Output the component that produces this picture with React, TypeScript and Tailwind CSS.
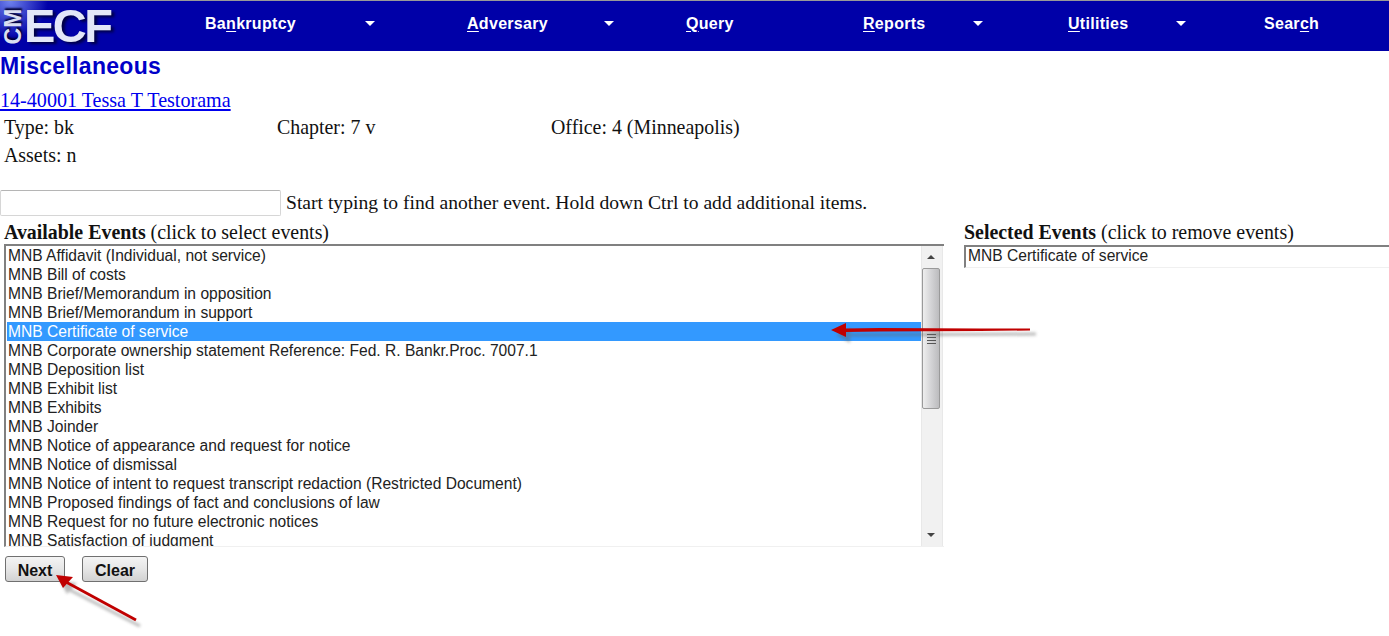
const events = [
  'MNB Affidavit (Individual, not service)',
  'MNB Bill of costs',
  'MNB Brief/Memorandum in opposition',
  'MNB Brief/Memorandum in support',
  'MNB Certificate of service',
  'MNB Corporate ownership statement Reference: Fed. R. Bankr.Proc. 7007.1',
  'MNB Deposition list',
  'MNB Exhibit list',
  'MNB Exhibits',
  'MNB Joinder',
  'MNB Notice of appearance and request for notice',
  'MNB Notice of dismissal',
  'MNB Notice of intent to request transcript redaction (Restricted Document)',
  'MNB Proposed findings of fact and conclusions of law',
  'MNB Request for no future electronic notices',
  'MNB Satisfaction of judgment',
]

const sans = "font-['Liberation_Sans',Arial,sans-serif]"

function Caret() {
  return <span className="w-0 h-0 border-x-[5px] border-x-transparent border-t-[5px] border-t-white" />
}

function NavItem({ before, letter, after, width, caretAt }: { before: string; letter: string; after: string; width: string; caretAt?: string }) {
  return (
    <div className={`${width} flex items-center shrink-0 pb-[5px]`}>
      <span className="text-[16px] font-bold tracking-[0.3px] text-white">
        {before}<span className="underline underline-offset-2">{letter}</span>{after}
      </span>
      {caretAt && <span className={`${caretAt} flex`}><Caret /></span>}
    </div>
  )
}

function Logo() {
  return (
    <div className="w-[205px] h-full shrink-0 relative bg-[radial-gradient(circle_at_10px_0px,#6f82ee_0px,#0000a8_38px)]">
      <div className="absolute left-[5px] top-[7px] h-[36px] w-[18px] flex items-center justify-center">
        <span className="-rotate-90 text-[23px] leading-[23px] font-bold text-[#d9def2] [text-shadow:2px_1px_2px_#000033]">CM</span>
      </div>
      <span className="absolute left-[24px] top-[1px] text-[47px] leading-[48px] font-bold tracking-[-2.5px] text-[#e3e7f8] blur-[0.4px] [text-shadow:3px_2px_3px_#000044]">ECF</span>
    </div>
  )
}

function Scrollbar() {
  return (
    <div className="w-[22px] mr-px shrink-0 h-full bg-[#f1f1f1] border-x border-[#e8e8e8] flex flex-col items-center pr-[2px]">
      <div className="h-[22px] flex items-center justify-center">
        <span className="w-0 h-0 border-x-[4px] border-x-transparent border-b-[4px] border-b-[#444]" />
      </div>
      <div className="w-[18px] h-[141px] rounded-[2px] border border-[#9a9a9a] bg-gradient-to-r from-[#eeeeee] via-[#d4d4d6] to-[#bcbcbe] flex flex-col items-center justify-center gap-[2px]">
        <span className="w-[9px] h-px bg-[#555]" />
        <span className="w-[9px] h-px bg-[#555]" />
        <span className="w-[9px] h-px bg-[#555]" />
        <span className="w-[9px] h-px bg-[#555]" />
      </div>
      <div className="flex-1" />
      <div className="h-[23px] flex items-center justify-center">
        <span className="w-0 h-0 border-x-[4px] border-x-transparent border-t-[4px] border-t-[#444]" />
      </div>
    </div>
  )
}

// red annotation arrows from the screenshot
function Arrows() {
  return (
    <svg className="absolute left-0 top-0 pointer-events-none" width="1389" height="636" viewBox="0 0 1389 636">
      <g opacity="0.45" className="blur-[1.5px]">
        <path d="M850 335 L1036 334" stroke="#666" strokeWidth="3" fill="none" />
        <path d="M836 335 L851 328 L850 343 Z" fill="#666" />
        <path d="M70 590 L140 626" stroke="#666" strokeWidth="3" fill="none" />
        <path d="M60 581 L77 583 L67 594 Z" fill="#666" />
      </g>
      <path d="M845 328.5 L880 328 L980 328.5 L1030 328.5 L1030 330.5 L980 331 L880 331.5 L845 332 Z" fill="#c00000" />
      <path d="M831 330 L846 323 L846 337 Z" fill="#c00000" />
      <path d="M66 582 L136 620" stroke="#c00000" strokeWidth="2.8" fill="none" />
      <path d="M56 575 L73 577 L63 588 Z" fill="#c00000" />
    </svg>
  )
}

export default function App() {
  return (
    <div className="w-[1389px] h-[636px] overflow-hidden relative bg-white font-['Liberation_Serif','Times_New_Roman',serif] text-[19.9px] leading-[28px] text-[#111]">
      {/* Top menu */}
      <div className={`${sans} h-[51px] border-t border-[#999] bg-[#0000a8] flex items-center`}>
        <Logo />
        <NavItem before="Ba" letter="n" after="kruptcy" width="w-[262px]" caretAt="ml-[69px]" />
        <NavItem before="" letter="A" after="dversary" width="w-[219px]" caretAt="ml-[56px]" />
        <NavItem before="" letter="Q" after="uery" width="w-[177px]" />
        <NavItem before="" letter="R" after="eports" width="w-[205px]" caretAt="ml-[47px]" />
        <NavItem before="" letter="U" after="tilities" width="w-[196px]" caretAt="ml-[47px]" />
        <NavItem before="Sear" letter="c" after="h" width="w-[125px]" />
      </div>

      <h1 className={`${sans} mt-px text-[23px] leading-[28px] font-bold tracking-[0.3px] text-[#0000c8]`}>Miscellaneous</h1>

      <div className="mt-[6px] h-[27px] text-[20.1px]">
        <a className="text-[#0000ee] underline">14-40001 Tessa T Testorama</a>
      </div>
      <div className="flex pl-[4px] h-[28px]">
        <span className="w-[273px]">Type: bk</span>
        <span className="w-[274px]">Chapter: 7 v</span>
        <span>Office: 4 (Minneapolis)</span>
      </div>
      <div className="pl-[4px] h-[28px]">Assets: n</div>

      <div className="flex items-center mt-[21px] h-[26px]">
        <div className="w-[281px] h-[26px] rounded-[2px] border border-[#d6d6d6] border-t-[#b5b5b5] bg-white" />
        <span className="ml-[5px] text-[19.6px] whitespace-nowrap">Start typing to find another event. Hold down Ctrl to add additional items.</span>
      </div>

      <div className="flex mt-[3px]">
        <div className="w-[964px] shrink-0 pl-[4px]">
          <div className="h-[25px] -mt-px pb-px"><b>Available Events</b> (click to select events)</div>
          <div className={`${sans} mt-px w-[940px] h-[303px] border-t-2 border-l-2 border-t-[#808080] border-l-[#808080] border-b border-b-[#f0f0f0] flex overflow-hidden text-[15.6px] leading-[19px] text-[#222]`}>
            <div className="flex-1 pl-px overflow-hidden">
              {events.map((e) => (
                <div key={e} className={`h-[19px] whitespace-nowrap pl-px ${e === 'MNB Certificate of service' ? 'bg-[#3399ff] text-white' : ''}`}>{e}</div>
              ))}
            </div>
            <Scrollbar />
          </div>
        </div>
        <div className="flex-1 min-w-0">
          <div className="h-[26px] -mt-px whitespace-nowrap"><b>Selected Events</b> (click to remove events)</div>
          <div className={`${sans} mt-px h-[23px] border-t-2 border-l-2 border-t-[#808080] border-l-[#808080] border-b border-b-[#f0f0f0] text-[15.6px] leading-[17px] pl-[2px] text-[#222]`}>
            MNB Certificate of service
          </div>
        </div>
      </div>

      <div className={`${sans} flex gap-[17px] pl-[5px] mt-[9px] text-[16px] font-bold text-[#111]`}>
        <button className="w-[60px] h-[26px] pb-[2px] rounded-[3px] border border-[#707070] bg-gradient-to-b from-[#f4f4f4] via-[#e6e6e6] to-[#d2d2d2]">Next</button>
        <button className="w-[66px] h-[26px] pb-[2px] rounded-[3px] border border-[#707070] bg-gradient-to-b from-[#f4f4f4] via-[#e6e6e6] to-[#d2d2d2]">Clear</button>
      </div>

      <Arrows />
    </div>
  )
}
